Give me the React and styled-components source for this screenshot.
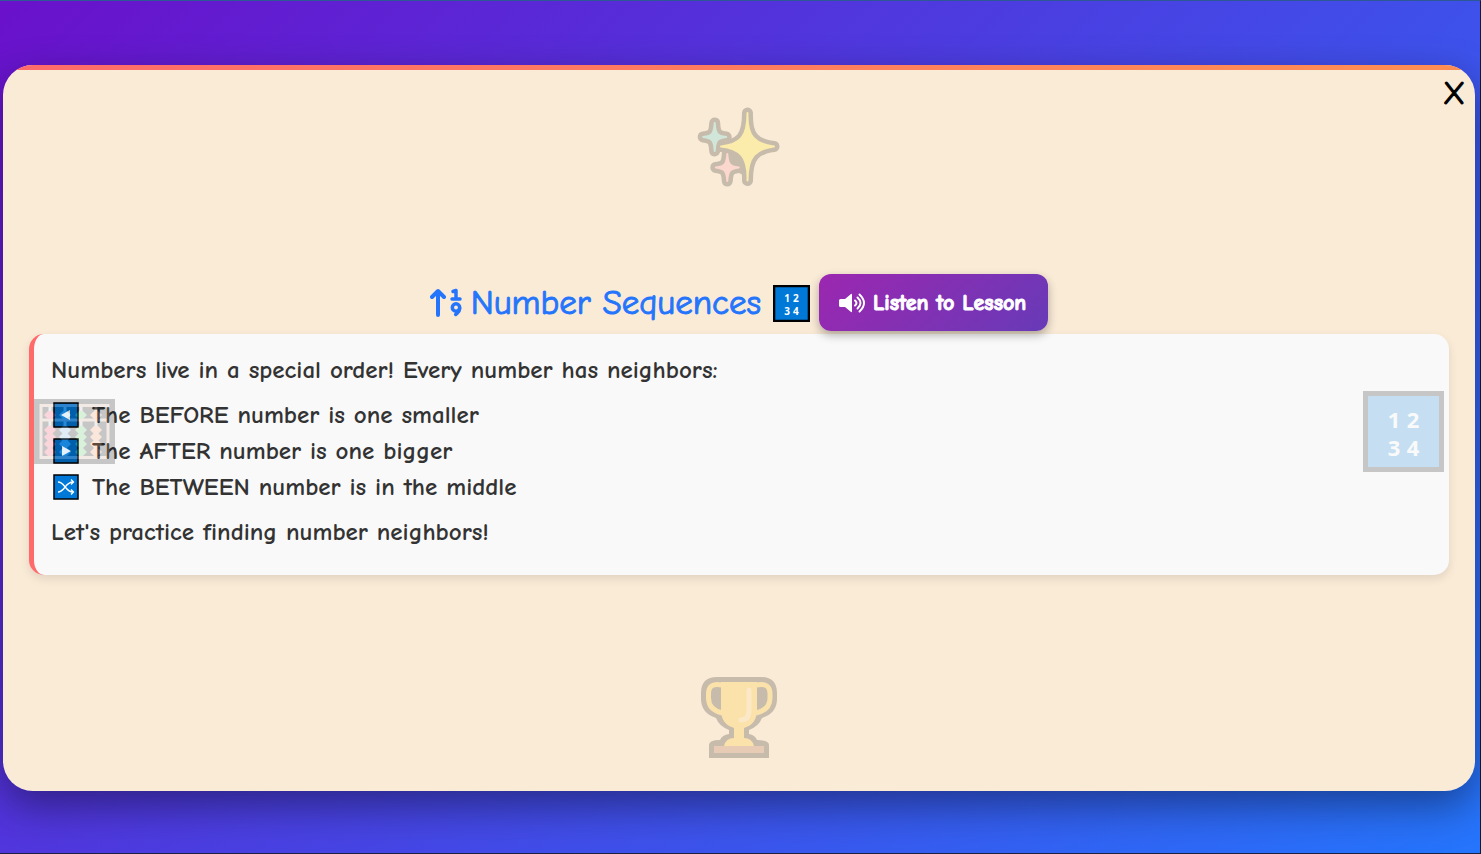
import styled, { createGlobalStyle } from 'styled-components';

const GlobalStyle = createGlobalStyle`
    * {
        box-sizing: border-box;
    }

    body {
        margin: 0;
        font-family: 'Comic Sans MS', 'Comic Neue', 'Noto Sans', sans-serif;
        color: #333;
    }
`;

const Page = styled.div`
    min-height: 100vh;
    padding: 2px 5px 0 3px;
    display: flex;
    align-items: center;
    background: linear-gradient(135deg, #6a11cb 0%, #2575fc 100%);
    border-top: 1px solid #2d5896;
    border-right: 1px solid #151a2c;
    border-bottom: 1px solid #1c2142;
`;

const Card = styled.main`
    position: relative;
    flex: 1;
    min-height: 85vh;
    padding: 0 26px 7px;
    display: flex;
    flex-direction: column;
    justify-content: center;
    overflow: hidden;
    background-color: #faebd7;
    border-radius: 30px;
`;

const CardShadow = styled.div`
    flex: 1;
    display: flex;
    border-radius: 30px;
    box-shadow: 0 15px 40px rgba(0, 0, 0, 0.4);
`;

const TopBar = styled.div`
    position: absolute;
    top: 0;
    left: 0;
    right: 0;
    height: 5px;
    background: linear-gradient(90deg, #ff6b6b, #ff8e53);
`;

const CloseButton = styled.button`
    position: absolute;
    top: 8px;
    right: 6px;
    padding: 0 4px;
    border: none;
    background: none;
    color: #000;
    font-family: inherit;
    font-size: 32px;
    line-height: 42px;
    -webkit-text-stroke: 1px currentColor;
    cursor: pointer;
`;

const Header = styled.header`
    position: relative;
    z-index: 1;
    display: flex;
    justify-content: center;
    align-items: center;
    gap: 9px;
    padding-bottom: 3px;
`;

const Title = styled.h1`
    display: flex;
    align-items: center;
    gap: 9px;
    margin: 0;
    padding-top: 2px;
    color: #2575fc;
    font-size: 35px;
    font-weight: 400;
    line-height: 48px;
`;

const TitleText = styled.span`
    padding-right: 3px;
    -webkit-text-stroke: 1px currentColor;
`;

const ListenButton = styled.button`
    display: flex;
    align-items: center;
    gap: 8px;
    padding: 15px 22px 13px 20px;
    border: none;
    border-radius: 12px;
    background: linear-gradient(135deg, #9c27b0, #673ab7);
    box-shadow: 0 4px 10px rgba(0, 0, 0, 0.3);
    color: #fff;
    font-family: inherit;
    font-size: 22px;
    font-weight: 700;
    line-height: 29px;
    cursor: pointer;
`;

const ButtonLabel = styled.span`
    -webkit-text-stroke: 1px currentColor;
`;

const Lesson = styled.section`
    padding: 18px 17px 25px;
    border-left: 5px solid #ff6b6b;
    border-radius: 15px;
    background-color: #f9f9f9;
    box-shadow: 0 4px 10px rgba(0, 0, 0, 0.1);
    font-size: 25px;
    font-weight: 700;
    line-height: 36px;
`;

const Paragraph = styled.p`
    margin: 0;
`;

const RuleList = styled.ul`
    margin: 9px 0;
    padding: 0;
    list-style: none;
`;

const Rule = styled.li`
    display: flex;
    align-items: center;
    gap: 13px;
    padding-left: 2px;
`;

const Decoration = styled.div`
    position: absolute;
    z-index: 2;
    display: flex;
    opacity: 0.2;
    pointer-events: none;
    ${props => props.$place === 'top' && 'top: 43px; left: 0; right: 0; justify-content: center;'}
    ${props => props.$place === 'bottom' && 'bottom: 32px; left: 0; right: 0; justify-content: center;'}
    ${props => props.$place === 'left' && 'left: 31px; top: 7px; bottom: 0; align-items: center;'}
    ${props => props.$place === 'right' && 'right: 31px; top: 7px; bottom: 0; align-items: center;'}
`;

const SortIcon = () => (
    <svg width="32" height="32" viewBox="0 0 32 32" fill="none" stroke="currentColor" strokeLinecap="round" strokeLinejoin="round">
        <path d="M8 28V5M2 10l6-6 6 6" strokeWidth="4" />
        <path d="M23 4.5l3-1v8M22 12h8" strokeWidth="3.5" />
        <circle cx="26" cy="20.5" r="3.7" strokeWidth="3.5" />
        <path d="M29.700 21.5c0 3-2 4-4 6" strokeWidth="3.5" />
    </svg>
);

const SpeakerIcon = () => (
    <svg width="26" height="20" viewBox="0 0 26 20" fill="none" stroke="currentColor" strokeWidth="2" strokeLinecap="round">
        <path d="M1.500 6H6l6-5q1-.5 1 .5v17q0 1-1 .5l-6-5H1.500Q0 14 0 12.500v-5Q0 6 1.500 6z" fill="currentColor" stroke="none" />
        <path d="M16 7.500q3 2.500 0 5M18.500 4.500q6 5.500 0 11M20.500 1.500q9 8.500 0 17" />
    </svg>
);

const NumbersIcon = ({ size }) => (
    <svg width={size} height={size} viewBox="0 0 81 81">
        <path d="M0 0h81v81H0z" fill="#000" />
        <path d="M5 5h71v71H5z" fill="#0078d7" />
        <g fill="#fff" fontFamily="'Noto Sans', sans-serif" fontSize="22" fontWeight="700" textAnchor="middle">
            <text x="31" y="37">1</text>
            <text x="50" y="37">2</text>
            <text x="31" y="65">3</text>
            <text x="50" y="65">4</text>
        </g>
    </svg>
);

const TileIcon = ({ children }) => (
    <svg width="26" height="26" viewBox="0 0 26 26">
        <path d="M1 1h24v24H1z" fill="#0078d7" stroke="#000" strokeWidth="1.5" />
        {children}
    </svg>
);

const SparklesIcon = () => {
    const stars = [
        ['#30d5e0', 'M15.700 15q.5 8 2.500 10.500 2 2.500 9 3.500-7 1-9 3.500-2 2.500-2.500 10.500-.5-8-2.500-10.500-2-2.500-9-3.500 7-1 9-3.500 2-2.500 2.500-10.500z'],
        ['#ff8aa8', 'M28.300 46q.5 7.500 2.500 10 2 2.500 9 3.500-7 1-9 3.500-2 2.500-2.500 10-.5-7.500-2.500-10-2-2.500-9-3.500 7-1 9-3.500 2-2.500 2.500-10z'],
        ['#fff200', 'M48.500 5q0 18-6 25T22 38.500q14 1.500 20.500 8.500t6 25.500q0-18.500 6.500-25.500t20-8.500q-14-1.500-20.500-8.500t-6-25z'],
    ];
    return (
        <svg width="81" height="79" viewBox="0 0 81 79" overflow="visible">
            {stars.map(([color, shape]) => (
                <path key={color} d={shape} fill="#000" stroke="#000" strokeWidth="11" strokeLinejoin="round" />
            ))}
            <path d="M24 42l14 0 8 12v14l-8-4z" fill="#000" />
            {stars.map(([color, shape]) => (
                <path key={color} d={shape} fill={color} stroke={color} strokeWidth="2" strokeLinejoin="round" />
            ))}
        </svg>
    );
};

const TrophyIcon = () => (
    <svg width="77" height="82" viewBox="0 0 77 82">
        <path d="M16 0h44q16 0 16 16v6q0 14-15 19-3 8-13 12v4q6 1 8 6 12 0 12 5v13H8V68q0-5 11-5 2-5 9-6v-4q-10-4-13-12Q0 36 0 22v-6Q0 0 16 0z" fill="#000" />
        <path d="M21 8Q7.500 5 7.500 17v4q0 12 14 15M55 8q14-3 14 9v4q0 12-14 15" fill="none" stroke="#ffc000" strokeWidth="5" />
        <path d="M20 5h36v28q0 14-13 18v10q8 0 10 8H23q2-8 10-8V51Q20 47 20 33z" fill="#ffc000" />
        <path d="M13 69h50v7H13z" fill="#a0522d" />
        <path d="M48 13v20q0 10-8 10" fill="none" stroke="#ffe08a" strokeWidth="5" strokeLinecap="round" />
    </svg>
);

const AbacusIcon = () => (
    <svg width="81" height="65" viewBox="0 0 81 65">
        <path d="M0 0h81v65H0z" fill="#000" />
        <path d="M16 7v52M31 7v52M47 7v52M62 7v52" fill="none" stroke="#ccc" strokeWidth="3" />
        <path d="M7 6.500h67v52H7zM7 21h67" fill="none" stroke="#e3b39b" strokeWidth="3" />
        {[['#ff4d6d', 16], ['#83beec', 31], ['#5fd36a', 47], ['#ff9f66', 62]].map(([color, x]) => (
            [16, 31, 38, 45, 53].map(y => (
                <path key={`${x}-${y}`} d={`M${x - 2} ${y - 4}h4l4 4-4 4h-4l-4-4z`} fill={color} />
            ))
        ))}
    </svg>
);

const rules = [
    { text: 'The BEFORE number is one smaller', icon: <path d="M8 13l9-5v10z" fill="#fff" /> },
    { text: 'The AFTER number is one bigger', icon: <path d="M18 13L9 8v10z" fill="#fff" /> },
    {
        text: 'The BETWEEN number is in the middle',
        icon: <path d="M5 8c7 0 7 10 15 10M5 18c7 0 7-10 15-10M18 5.500l2.500 2.500-2.500 2.500M18 15.500l2.500 2.500-2.500 2.500" fill="none" stroke="#fff" strokeWidth="1.3" />,
    },
];

const App = () => (
    <>
        <GlobalStyle />
        <Page>
            <CardShadow>
                <Card>
                    <TopBar />
                    <CloseButton type="button" aria-label="Close">X</CloseButton>
                    <Header>
                        <Title>
                            <SortIcon />
                            <TitleText>Number Sequences</TitleText>
                            <NumbersIcon size={37} />
                        </Title>
                        <ListenButton type="button">
                            <SpeakerIcon />
                            <ButtonLabel>Listen to Lesson</ButtonLabel>
                        </ListenButton>
                    </Header>
                    <Lesson>
                        <Paragraph>Numbers live in a special order! Every number has neighbors:</Paragraph>
                        <RuleList>
                            {rules.map(rule => (
                                <Rule key={rule.text}>
                                    <TileIcon>{rule.icon}</TileIcon>
                                    {rule.text}
                                </Rule>
                            ))}
                        </RuleList>
                        <Paragraph>Let&apos;s practice finding number neighbors!</Paragraph>
                    </Lesson>
                    <Decoration $place="top"><SparklesIcon /></Decoration>
                    <Decoration $place="left"><AbacusIcon /></Decoration>
                    <Decoration $place="right"><NumbersIcon size={81} /></Decoration>
                    <Decoration $place="bottom"><TrophyIcon /></Decoration>
                </Card>
            </CardShadow>
        </Page>
    </>
);

export default App;
